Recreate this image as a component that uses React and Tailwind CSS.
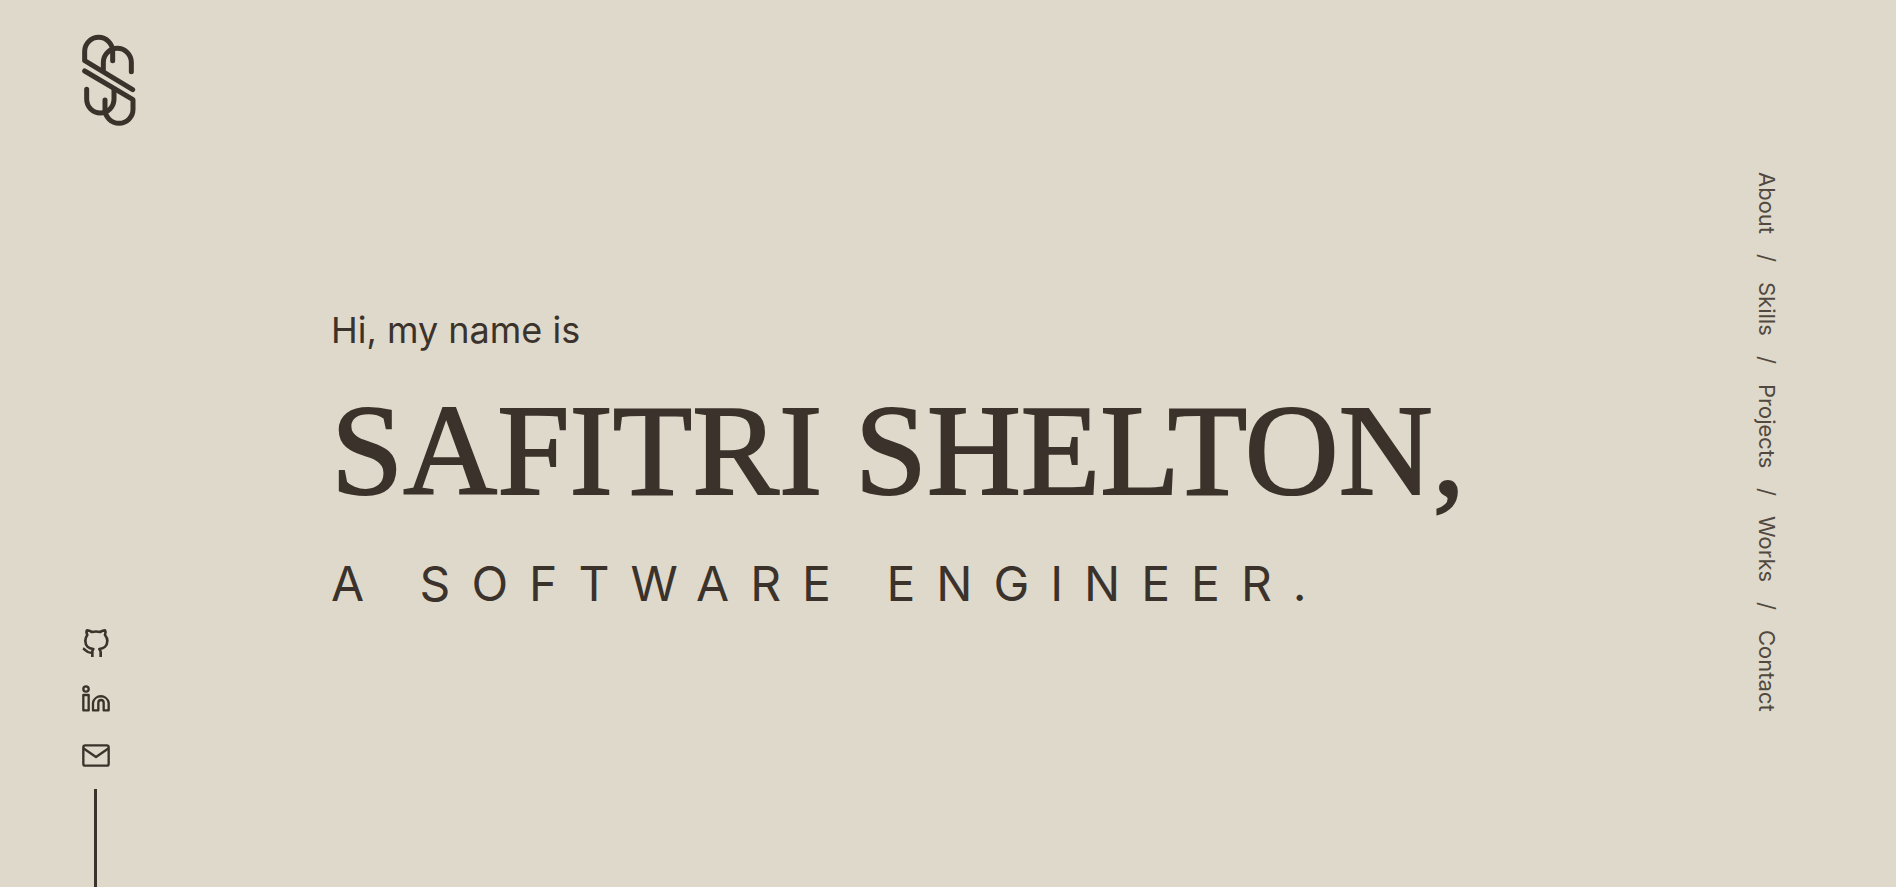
import React from "react";

const navItems = ["About", "Skills", "Projects", "Works", "Contact"];

function Logo() {
  return (
    <svg viewBox="0 0 162 276" className="h-23 w-[54px]" fill="none" stroke="currentColor" strokeWidth="15" strokeLinecap="round" strokeLinejoin="round" aria-hidden="true">
      <path d="M92 80V52A42 42 0 0 0 8 52V80L152 167" />
      <path d="M64 108V85A42 42 0 0 1 148 85V113" />
      <path d="M8 111L153 197V226A42 42 0 0 1 69 226V198" />
      <path d="M14 166V196A41 41 0 0 0 96 196V166" />
    </svg>
  );
}

function GithubIcon() {
  return (
    <svg viewBox="0 0 84 84" className="size-7" fill="none" stroke="currentColor" strokeWidth="8" strokeLinecap="butt" strokeLinejoin="round" aria-hidden="true">
      <path d="M3 58C11 62 14 73 31 72M31 84V68C31 65 32 63 34 60C21 59 10 51 10 35C10 28 12 23 16 18C13 12 13 7 15 4C20 4 25 6 30 9C38 7 46 7 54 9C59 6 64 4 69 4C71 7 71 12 69 18C73 23 76 28 76 35C76 51 64 59 52 60C54 63 56 66 56 69V84" />
    </svg>
  );
}

function LinkedinIcon() {
  return (
    <svg viewBox="0 0 84 84" className="size-7" fill="none" stroke="currentColor" strokeWidth="7" strokeLinejoin="round" aria-hidden="true">
      <circle cx="12" cy="12" r="8" />
      <path d="M4 30H20V76H4ZM33 76V53A24 24 0 0 1 80 53V76H65V53A8 8 0 0 0 49 53V76Z" />
    </svg>
  );
}

function MailIcon() {
  return (
    <svg viewBox="0 0 84 84" className="size-7" fill="none" stroke="currentColor" strokeWidth="7" strokeLinejoin="round" aria-hidden="true">
      <rect x="4" y="13" width="76" height="61" rx="6" />
      <path d="M4 22L42 48L80 22" />
    </svg>
  );
}

export default function App() {
  return (
    <div className="flex h-screen justify-between overflow-hidden bg-[#dfd9cb] font-[Inter,sans-serif] text-[#3b332b]">
      <aside className="flex flex-col justify-between pt-[34px] pl-[82px]">
        <a href="#home" aria-label="Home">
          <Logo />
        </a>
        <div className="flex w-7 flex-col">
          <ul className="flex flex-col gap-7">
            <li><a href="#github" aria-label="GitHub" className="block"><GithubIcon /></a></li>
            <li><a href="#linkedin" aria-label="LinkedIn" className="block"><LinkedinIcon /></a></li>
            <li><a href="#email" aria-label="Email" className="block"><MailIcon /></a></li>
          </ul>
          <div className="mt-5 ml-3 h-[98px] w-[3px] bg-current" />
        </div>
      </aside>
      <main className="flex flex-1 flex-col justify-center pt-[34px] pl-[195px] whitespace-nowrap">
        <p className="text-4xl leading-10">Hi, my name is</p>
        <h1 className="mt-[30px] font-['Liberation_Serif',serif] text-[130px] leading-[140px] [-webkit-text-stroke:2px]">SAFITRI SHELTON,</h1>
        <h2 className="mt-9 text-5xl leading-14 tracking-[21px]">A SOFTWARE ENGINEER.</h2>
      </main>
      <nav aria-label="Main" className="flex items-start pt-[172px] pr-[115px]">
        <ul className="flex gap-5 text-[22px] leading-7 text-[#51493f] [writing-mode:vertical-rl]">
          {navItems.map((item, i) => (
            <li key={item} className="flex gap-5">
              {i > 0 && <span aria-hidden="true">/</span>}
              <a href={"#" + item.toLowerCase()}>{item}</a>
            </li>
          ))}
        </ul>
      </nav>
    </div>
  );
}
